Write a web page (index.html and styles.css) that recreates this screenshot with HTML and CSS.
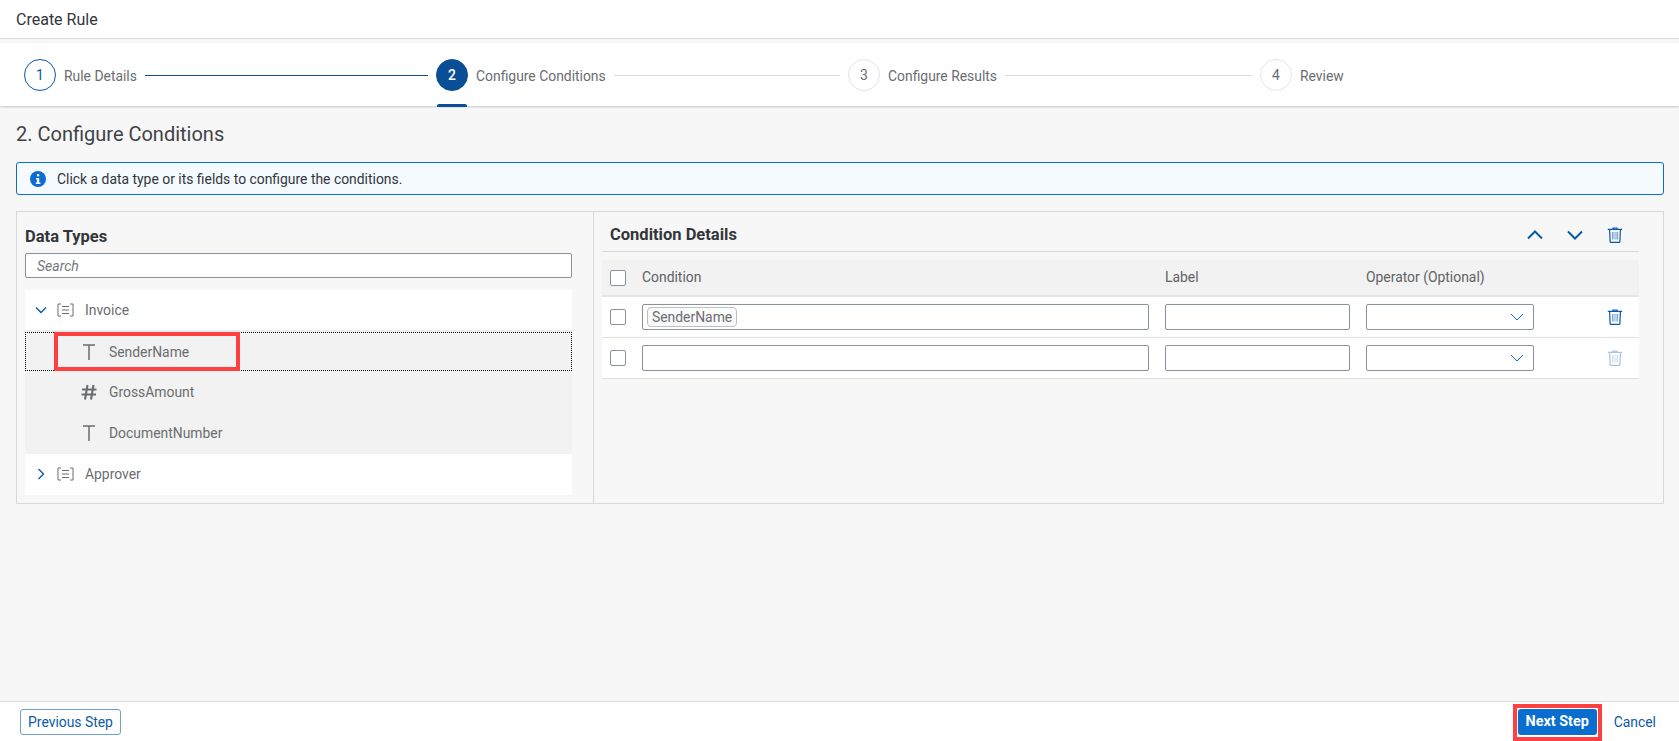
FILE: index.html
```html
<!DOCTYPE html>
<html lang="en">
<head>
    <meta charset="UTF-8">
    <meta name="viewport" content="width=device-width, initial-scale=1.0">
    <title>Create Rule</title>
    <link rel="stylesheet" href="styles.css">
</head>
<body>

<svg class="sprites" width="0" height="0">
    <symbol id="trash" viewBox="0 0 16 16">
        <path d="M.8 2.4h14.4M6 2.4V1h4v1.4M2.6 2.4l.5 12.2a.9.9 0 0 0 .9.8h8a.9.9 0 0 0 .9-.8l.5-12.2" fill="none" stroke="currentColor" stroke-width="1.2"/>
        <path d="M5.4 5v7.5M7 5v7.5M9 5v7.5M10.6 5v7.5" fill="none" stroke="currentColor" stroke-width=".8" opacity=".7"/>
    </symbol>
    <symbol id="struct" viewBox="0 0 17 14">
        <path d="M4 1H1v12h3M13 1h3v12h-3M5 3.5h7M5 7h7M5 10.5h7" fill="none" stroke="currentColor" stroke-width="1"/>
    </symbol>
    <symbol id="type-text" viewBox="0 0 16 16">
        <path d="M2 1h12M8 1v15" fill="none" stroke="currentColor" stroke-width="1.5"/>
    </symbol>
    <symbol id="type-number" viewBox="0 0 16 16">
        <path d="M6.5 1L4 15.5M12.5 1L10 15.5M1 5.5h14.5M.5 10.5H15" fill="none" stroke="currentColor" stroke-width="2.1"/>
    </symbol>
</svg>

<header class="title-bar">Create Rule</header>

<nav class="stepper">
    <div class="step">
        <span class="step-num done">1</span>
        <span class="step-label">Rule Details</span>
        <span class="step-line done"></span>
    </div>
    <div class="step current">
        <span class="step-num active">2</span>
        <span class="step-label">Configure Conditions</span>
        <span class="step-line"></span>
    </div>
    <div class="step">
        <span class="step-num">3</span>
        <span class="step-label">Configure Results</span>
        <span class="step-line"></span>
    </div>
    <div class="step">
        <span class="step-num">4</span>
        <span class="step-label">Review</span>
    </div>
</nav>

<main class="content">
    <h1 class="page-title">2. Configure Conditions</h1>

    <div class="info-strip">
        <svg class="info-icon" viewBox="0 0 16 16" width="16" height="16">
            <circle cx="8" cy="8" r="8" fill="#0a6ed1"/>
            <rect x="6.9" y="3" width="2.4" height="2.4" rx="1" fill="#fff"/>
            <path d="M6 7h3.2v4.6H10.4V13H5.8v-1.4h1.1V8.4H6z" fill="#fff"/>
        </svg>
        Click a data type or its fields to configure the conditions.
    </div>

    <section class="panel">
        <div class="types-pane">
            <h2 class="types-title">Data Types</h2>
            <input class="search" type="text" placeholder="Search">
            <ul class="tree">
                <li class="tree-row parent first">
                    <svg class="chev" viewBox="0 0 12 12" width="12" height="12"><path d="M1 3.5l5 5 5-5" fill="none" stroke="#0a5aa8" stroke-width="1.4"/></svg>
                    <svg class="struct" width="17" height="14"><use href="#struct"/></svg>
                    <span>Invoice</span>
                </li>
                <li class="tree-row child focused">
                    <svg class="type" width="16" height="16"><use href="#type-text"/></svg>
                    <span>SenderName</span>
                    <span class="red-box tree-mark"></span>
                </li>
                <li class="tree-row child">
                    <svg class="type" width="16" height="16"><use href="#type-number"/></svg>
                    <span>GrossAmount</span>
                </li>
                <li class="tree-row child">
                    <svg class="type" width="16" height="16"><use href="#type-text"/></svg>
                    <span>DocumentNumber</span>
                </li>
                <li class="tree-row parent last">
                    <svg class="chev" viewBox="0 0 12 12" width="12" height="12"><path d="M3.5 1l5 5-5 5" fill="none" stroke="#0a5aa8" stroke-width="1.4"/></svg>
                    <svg class="struct" width="17" height="14"><use href="#struct"/></svg>
                    <span>Approver</span>
                </li>
            </ul>
        </div>

        <div class="details-pane">
            <div class="details-bar">
                <h2 class="details-title">Condition Details</h2>
                <div class="details-tools">
                    <svg viewBox="0 0 16 10" width="16" height="10"><path d="M1 8.5l7-7 7 7" fill="none" stroke="#0a5aa8" stroke-width="2"/></svg>
                    <svg viewBox="0 0 16 10" width="16" height="10"><path d="M1 1.5l7 7 7-7" fill="none" stroke="#0a5aa8" stroke-width="2"/></svg>
                    <svg class="trash" width="16" height="16"><use href="#trash"/></svg>
                </div>
            </div>

            <div class="grid-row grid-head">
                <input class="check" type="checkbox">
                <span>Condition</span>
                <span>Label</span>
                <span>Operator (Optional)</span>
            </div>

            <div class="grid-row">
                <input class="check" type="checkbox">
                <div class="field"><span class="token">SenderName</span></div>
                <div class="field"></div>
                <div class="field select">
                    <svg viewBox="0 0 14 8" width="14" height="8"><path d="M1 1l6 6 6-6" fill="none" stroke="#0a6ed1" stroke-width="1"/></svg>
                </div>
                <svg class="trash row-trash" width="16" height="16"><use href="#trash"/></svg>
            </div>

            <div class="grid-row">
                <input class="check" type="checkbox">
                <div class="field"></div>
                <div class="field"></div>
                <div class="field select">
                    <svg viewBox="0 0 14 8" width="14" height="8"><path d="M1 1l6 6 6-6" fill="none" stroke="#0a6ed1" stroke-width="1"/></svg>
                </div>
                <svg class="trash row-trash disabled" width="16" height="16"><use href="#trash"/></svg>
            </div>
        </div>
    </section>
</main>

<footer class="footer">
    <button class="btn btn-ghost" type="button">Previous Step</button>
    <div class="footer-right">
        <div class="next-wrap">
            <button class="btn btn-primary" type="button">Next Step</button>
            <span class="red-box next-mark"></span>
        </div>
        <button class="btn btn-link" type="button">Cancel</button>
    </div>
</footer>

</body>
</html>
```

FILE: styles.css
```css
* {
    box-sizing: border-box;
}
html, body {
    height: 100%;
}
body {
    margin: 0;
    display: flex;
    flex-direction: column;
    background-color: #f7f7f7;
    color: #32363a;
    font-family: Roboto, "Liberation Sans", sans-serif;
    font-size: 13.9px;
}
.sprites {
    position: absolute;
}
.title-bar {
    height: 39px;
    padding: 1px 16px 0;
    line-height: 38px;
    background: white;
    border-bottom: 1px solid #d9d9d9;
    font-size: 16px;
}
.stepper {
    display: grid;
    grid-template-columns: repeat(4, 412px);
    height: 63px;
    margin-top: 4px;
    padding: 16px 0 0 24px;
    background: white;
    box-shadow: 0 1px 2px rgba(0, 0, 0, 0.2);
}
.step {
    position: relative;
    display: flex;
    align-items: center;
    height: 32px;
    color: #6a6d70;
}
.step.current::after {
    content: "";
    position: absolute;
    left: 1px;
    top: 45px;
    width: 30px;
    height: 3px;
    background: #0a4f96;
    border-radius: 2px 2px 0 0;
}
.step-num {
    flex: none;
    display: flex;
    align-items: center;
    justify-content: center;
    width: 32px;
    height: 32px;
    margin-right: 8px;
    border: 1px solid #e5e5e5;
    border-radius: 50%;
}
.step-num.done {
    border-color: #0a5aa8;
    color: #0a5aa8;
}
.step-num.active {
    border-color: #0a4f96;
    background: #0a4f96;
    color: white;
    font-weight: 500;
}
.step-label {
    flex: none;
    padding-top: 2px;
}
.step-line {
    flex: 1;
    height: 1px;
    margin: 0 8px;
    background: #dcdcdc;
}
.step-line.done {
    background: #0a4f96;
}

.content {
    flex: 1;
    padding: 0 15px 0 16px;
}
.page-title {
    margin: 17px 0 0;
    font-size: 20px;
    font-weight: 400;
    line-height: 23px;
    color: #3f4347;
}
.info-strip {
    display: flex;
    align-items: center;
    gap: 11px;
    height: 33px;
    margin-top: 16px;
    padding-left: 13px;
    background: #f5faff;
    border: 1px solid #0a6ed1;
    border-radius: 3px;
}
.panel {
    display: flex;
    height: 293px;
    margin-top: 16px;
    border: 1px solid #d9d9d9;
}
.types-pane {
    flex: none;
    width: 577px;
    padding: 0 21px 0 8px;
    border-right: 1px solid #d9d9d9;
}
.types-title {
    margin: 16px 0 0;
    font-size: 16.5px;
    font-weight: 700;
    line-height: 18px;
}
.search {
    display: block;
    width: 100%;
    height: 25px;
    margin-top: 7px;
    padding: 0 11px;
    border: 1px solid #89919a;
    border-radius: 2px;
    font: italic 14px Roboto, sans-serif;
}
.search::placeholder {
    color: #74777a;
}
.tree {
    margin: 12px 0 0;
    padding: 0;
    list-style: none;
}
.tree-row {
    position: relative;
    display: flex;
    align-items: center;
    height: 41px;
    color: #6a6d70;
}
.tree-row.parent {
    background: white;
    padding-left: 10px;
}
.tree-row.parent.first {
    height: 42px;
    border-bottom: 2px solid #ededed;
}
.tree-row.parent.last {
    padding-bottom: 1px;
}
.tree-row.child {
    height: 41.5px;
    background: #f2f2f2;
    padding-left: 56px;
}
.tree-row.child.focused {
    height: 39px;
    outline: 1px dotted #000;
    outline-offset: -1px;
}
.chev {
    margin-right: 10px;
}
.struct {
    margin-right: 11px;
}
.type {
    margin-right: 12px;
}
.red-box {
    position: absolute;
    border: 4px solid #ff4040;
    pointer-events: none;
}
.tree-mark {
    left: 29px;
    top: 0;
    width: 186px;
    height: 39px;
}

.details-pane {
    flex: 1;
    padding: 0 24px 0 8px;
}
.details-bar {
    display: flex;
    align-items: center;
    justify-content: space-between;
    height: 40px;
    padding: 6px 16px 0 8px;
    border-bottom: 1px solid #d9d9d9;
}
.details-title {
    margin: 0;
    font-size: 16.5px;
    font-weight: 700;
}
.details-tools {
    display: flex;
    align-items: center;
    gap: 24px;
    color: #0a5aa8;
}
.grid-row {
    display: grid;
    grid-template-columns: 16px 507px 185px 168px 1fr;
    column-gap: 16px;
    align-items: center;
    height: 41px;
    padding-left: 8px;
    background: white;
    border-bottom: 1px solid #e0e0e0;
}
.grid-head {
    height: 37px;
    margin-top: 8px;
    background: #f2f2f2;
    border-bottom: 2px solid #e5e5e5;
    color: #5f6266;
}
.grid-head span {
    margin-bottom: 2px;
}
.check {
    appearance: none;
    width: 16px;
    height: 16px;
    margin: 0;
    background: white;
    border: 1px solid #89919a;
    border-radius: 2px;
}
.field {
    display: flex;
    align-items: center;
    height: 26px;
    padding-left: 4px;
    background: white;
    border: 1px solid #89919a;
    border-radius: 2px;
}
.field.select {
    justify-content: flex-end;
    padding-right: 9px;
}
.token {
    padding: 0 4px;
    line-height: 18px;
    color: #6a6d70;
    border: 1px solid #bfbfbf;
    border-radius: 4px;
    background: #fafafa;
}
.row-trash {
    justify-self: end;
    margin-right: 16px;
    color: #0a5aa8;
}
.row-trash.disabled {
    opacity: 0.35;
}

.footer {
    flex: none;
    display: flex;
    align-items: center;
    justify-content: space-between;
    height: 40px;
    padding: 0 23px 0 20px;
    background: white;
    border-top: 1px solid #d9d9d9;
}
.footer-right {
    display: flex;
    align-items: center;
    gap: 17px;
}
.next-wrap {
    position: relative;
    display: flex;
}
.next-mark {
    left: -5px;
    top: -5px;
    width: 89px;
    height: 37px;
}
.btn {
    height: 26px;
    padding: 0;
    font-family: inherit;
    font-size: 13.9px;
    border-radius: 3px;
    cursor: pointer;
}
.btn-ghost {
    width: 101px;
    background: white;
    color: #0a5aa8;
    border: 1px solid #6f9fd4;
}
.btn-primary {
    width: 79px;
    background: #0a6ed1;
    color: white;
    border: none;
    font-size: 14.4px;
    font-weight: 700;
}
.btn-link {
    background: none;
    border: none;
    color: #0a5aa8;
}
```
